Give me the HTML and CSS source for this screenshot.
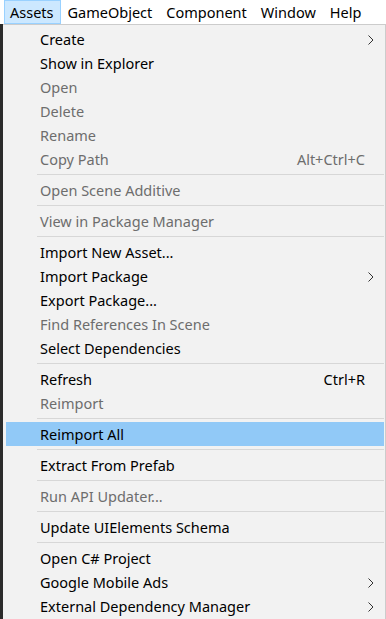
FILE: index.html
```html
<!DOCTYPE html>
<html lang="en">
<head>
    <meta charset="UTF-8">
    <meta name="viewport" content="width=device-width, initial-scale=1.0">
    <title>Assets Menu</title>
    <link rel="stylesheet" href="styles.css">
</head>
<body>
    <!-- Menu bar -->
    <div class="menubar">
        <span class="menubar-item active">Assets</span>
        <span class="menubar-item">GameObject</span>
        <span class="menubar-item">Component</span>
        <span class="menubar-item">Window</span>
        <span class="menubar-item">Help</span>
    </div>

    <div class="workspace">
        <div class="editor-strip"></div>

        <!-- Assets dropdown -->
        <div class="dropdown">
            <div class="item">Create<svg class="arrow" viewBox="0 0 6 10"><polyline points="0.5,0.5 5,5 0.5,9.5"/></svg></div>
            <div class="item">Show in Explorer</div>
            <div class="item disabled">Open</div>
            <div class="item disabled">Delete</div>
            <div class="item disabled">Rename</div>
            <div class="item disabled">Copy Path<span class="shortcut">Alt+Ctrl+C</span></div>
            <div class="separator"></div>
            <div class="item disabled">Open Scene Additive</div>
            <div class="separator"></div>
            <div class="item disabled">View in Package Manager</div>
            <div class="separator"></div>
            <div class="item">Import New Asset...</div>
            <div class="item">Import Package<svg class="arrow" viewBox="0 0 6 10"><polyline points="0.5,0.5 5,5 0.5,9.5"/></svg></div>
            <div class="item">Export Package...</div>
            <div class="item disabled">Find References In Scene</div>
            <div class="item">Select Dependencies</div>
            <div class="separator"></div>
            <div class="item">Refresh<span class="shortcut">Ctrl+R</span></div>
            <div class="item disabled">Reimport</div>
            <div class="separator"></div>
            <div class="item selected">Reimport All</div>
            <div class="separator"></div>
            <div class="item">Extract From Prefab</div>
            <div class="separator"></div>
            <div class="item disabled">Run API Updater...</div>
            <div class="separator"></div>
            <div class="item">Update UIElements Schema</div>
            <div class="separator"></div>
            <div class="item">Open C# Project</div>
            <div class="item">Google Mobile Ads<svg class="arrow" viewBox="0 0 6 10"><polyline points="0.5,0.5 5,5 0.5,9.5"/></svg></div>
            <div class="item">External Dependency Manager<svg class="arrow" viewBox="0 0 6 10"><polyline points="0.5,0.5 5,5 0.5,9.5"/></svg></div>
        </div>
    </div>
</body>
</html>
```
FILE: styles.css
```css
body {
    margin: 0;
    padding: 0;
    background: #2d2d2d;
    font-family: "Noto Sans", "Open Sans", sans-serif;
    font-size: 14.5px;
    color: #000;
    overflow: hidden;
}

/* Menu bar */
.menubar {
    display: flex;
    height: 24px;
    background: #ffffff;
    padding-left: 4px;
}

.menubar-item {
    display: flex;
    align-items: center;
    padding: 0 6px 0 5px;
    margin-right: 1px;
    border: 1px solid transparent;
    height: 22px;
}

.menubar-item.active {
    background: #cce8ff;
    border-color: #99d1ff;
}

/* Page under the menu */
.workspace {
    display: flex;
}

.editor-strip {
    width: 3px;
    background: #2b2b2b;
}

.dropdown {
    width: 380px;
    background: #f2f2f2;
    border: 1px solid #cccccc;
    border-left: none;
    padding: 2px 0 0 2px;
    min-height: 600px;
}

.item {
    position: relative;
    height: 24px;
    display: flex;
    align-items: center;
    padding-left: 34px;
    margin-right: 1px;
    margin-left: 1px;
    white-space: nowrap;
}

.item.disabled {
    color: #6d6d6d;
}

.item.selected {
    background: #91c9f7;
}

.shortcut {
    margin-left: auto;
    margin-right: 19px;
}

.arrow {
    position: absolute;
    right: 10px;
    top: 8px;
    width: 6px;
    height: 10px;
    fill: none;
    stroke: #333333;
    stroke-width: 1;
}

.separator {
    height: 1px;
    margin: 3px 1px 3px 32px;
    background: #d7d7d7;
}
```
